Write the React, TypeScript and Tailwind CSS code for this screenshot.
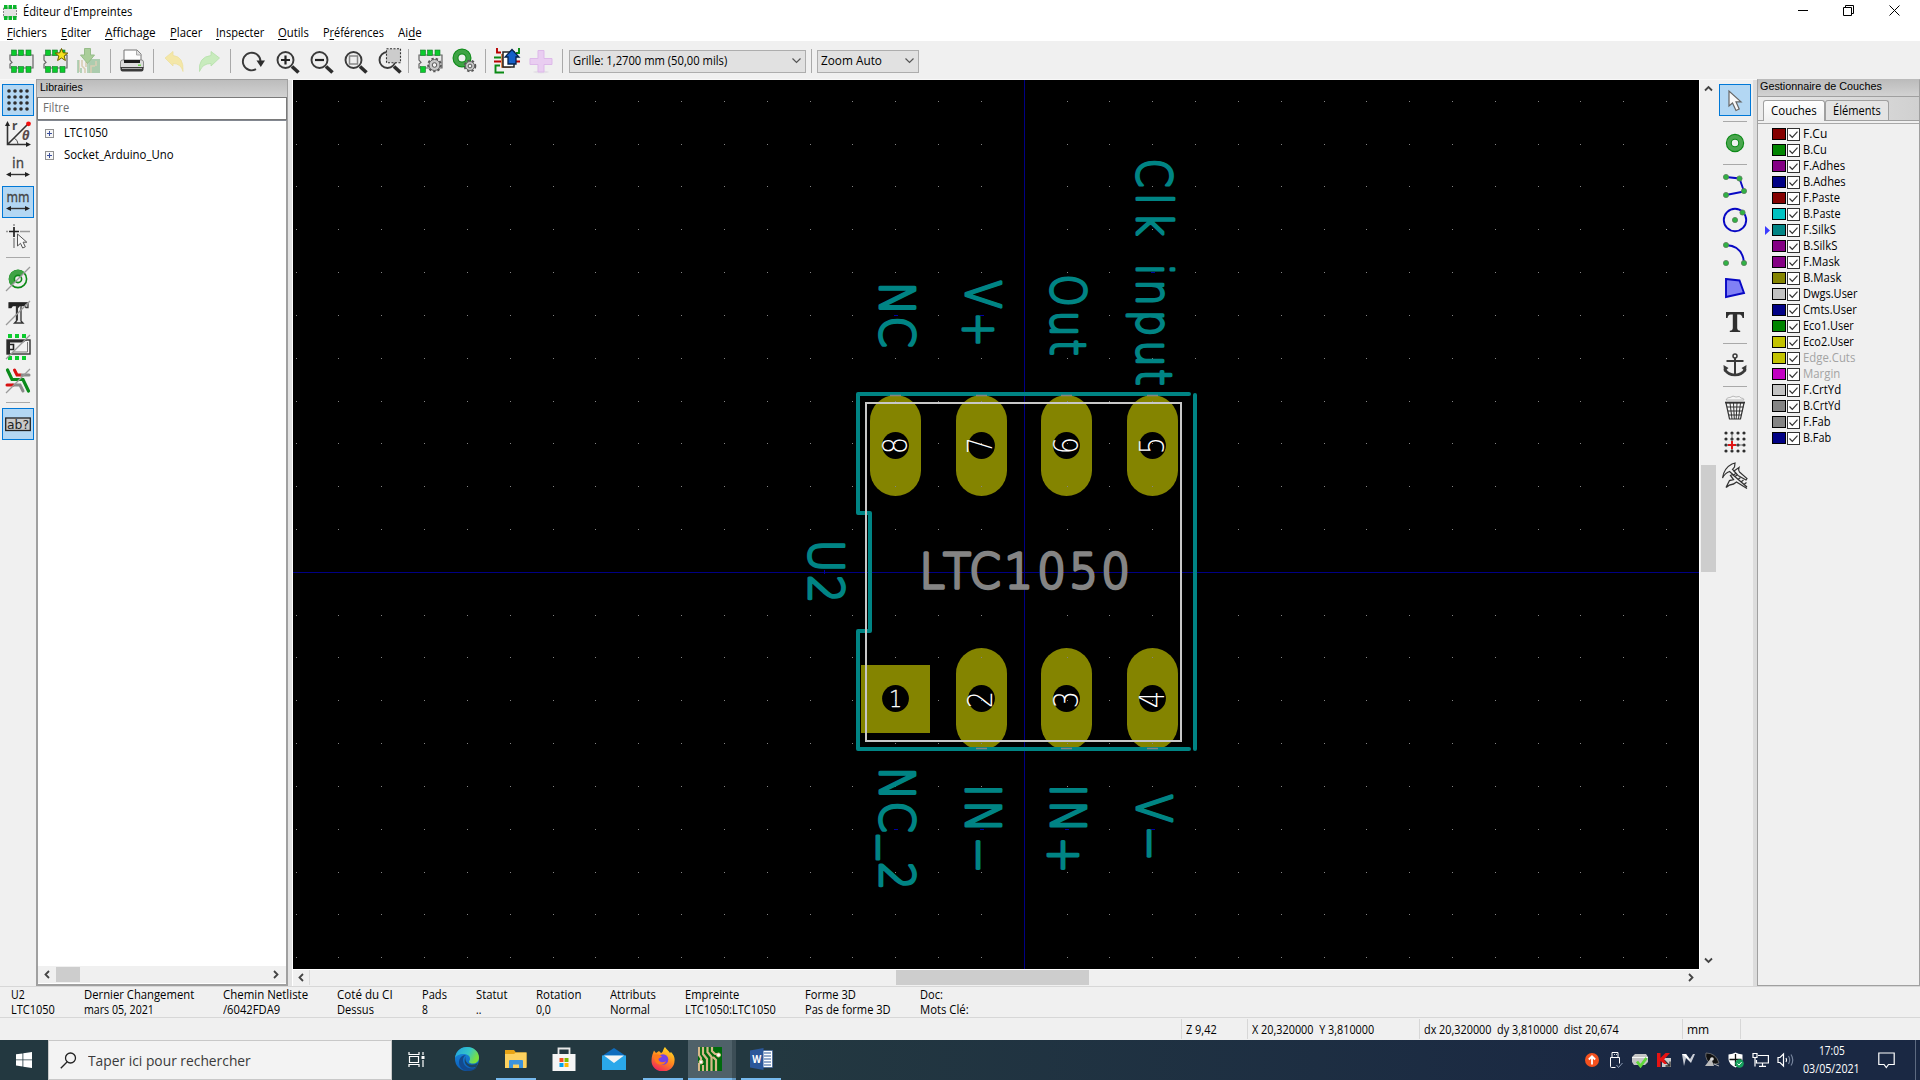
import React, { useLayoutEffect, useRef } from "react";

/* Text squeezed or stretched horizontally to a known width. */
function T({ w, children, className = "" }: { w: number; children: React.ReactNode; className?: string }) {
  const ref = useRef<HTMLSpanElement>(null);
  useLayoutEffect(() => {
    const el = ref.current;
    if (el && el.offsetWidth) el.style.transform = `scaleX(${w / el.offsetWidth})`;
  }, [w]);
  return (
    <span className={"inline-flex shrink-0 whitespace-pre " + className} style={{ width: w }}>
      <span ref={ref} className="inline-block origin-left">
        {children}
      </span>
    </span>
  );
}

function Ico({ children, s = 26 }: { children: React.ReactNode; s?: number }) {
  return (
    <svg width={s} height={s} viewBox="0 0 26 26" fill="none" className="shrink-0 overflow-visible">
      {children}
    </svg>
  );
}

const gear = (cx: number, cy: number, r: number) => (
  <g>
    <circle cx={cx} cy={cy} r={r} stroke="#555" strokeWidth="2.6" strokeDasharray="2.2 1.9" />
    <circle cx={cx} cy={cy} r={r - 0.5} fill="#c8c8c8" stroke="#666" strokeWidth="1" />
    <circle cx={cx} cy={cy} r={r * 0.38} fill="#f4f4f4" stroke="#555" strokeWidth="1" />
  </g>
);

const body = <path d="M2 7H25V20H2V16L4 14.500L2 12Z" fill="#e9e9e9" stroke="#666" strokeWidth="1.2" />;
const pads = [3.5, 10.500, 18];

const FpIcon = () => (
  <Ico>
    {body}
    {pads.map((x) => (
      <g key={x} fill="#0acb2c" stroke="#177a2a" strokeWidth=".6">
        <rect x={x} y="2" width="5" height="5.500" />
        <rect x={x} y="18.500" width="5" height="6" />
      </g>
    ))}
  </Ico>
);
const FpStarIcon = () => (
  <Ico>
    {body}
    {pads.map((x) => (
      <g key={x} fill="#0acb2c" stroke="#177a2a" strokeWidth=".6">
        <rect x={x} y="2" width="5" height="5.500" />
        <rect x={x} y="18.500" width="5" height="6" />
      </g>
    ))}
    <path d="M19.500 0.500l1.700 4.300 4.600.3-3.600 2.900 1.200 4.500-3.900-2.500-3.900 2.500 1.200-4.500-3.600-2.900 4.600-.3z" fill="#f5e21c" stroke="#6b5d00" strokeWidth="1" />
  </Ico>
);
const DownloadIcon = () => (
  <Ico>
    <g opacity=".6">
      <rect x="13" y="11" width="11" height="14" fill="#7fb583" />
      <path d="M3 12v12M6 12v6l3 3v4M10 14v5M15 25v-7h4M20 13v5" stroke="#c9b78b" strokeWidth="1.600" />
      <path d="M2 12v13M5 20v5M12 15v10" stroke="#6fae78" strokeWidth="1.500" />
      <path d="M8.500 0.500h6v6.500h4l-7 8.500L4.500 7h4z" fill="#7cb862" stroke="#5b9a45" />
    </g>
  </Ico>
);
const PrinterIcon = () => (
  <Ico>
    <path d="M5 13V2h13l4 4v7z" fill="#fdfdfd" stroke="#777" />
    <path d="M17.500 2v5h5" fill="#ddd" stroke="#999" strokeWidth=".8" />
    <path d="M1.500 14q0-2 2-2h19q2 0 2 2v6h-23z" fill="#dcdcdc" stroke="#777" strokeWidth=".8" />
    <path d="M5 12h16v3H5z" fill="#1c1c1c" />
    <path d="M1.500 19h23v2.500q0 2-2 2h-19q-2 0-2-2z" fill="#3a3a3a" />
    <path d="M3 20.500h20" stroke="#aaa" />
    <rect x="19" y="16.500" width="3" height="1.500" fill="#6fd44e" />
  </Ico>
);
const UndoIcon = () => (
  <Ico>
    <path d="M3 10L11 3.500v4q11 1 10 16-2-8-10-8V18z" fill="#f4e7a8" stroke="#ecdf9e" strokeWidth=".8" />
  </Ico>
);
const RedoIcon = () => (
  <Ico>
    <path d="M23.500 10L15 3.500v4Q2 9 3.500 23.500q3-8 11.500-8V18z" fill="#c8ebbd" stroke="#b4dfa8" strokeWidth=".8" />
  </Ico>
);
const RefreshIcon = () => (
  <Ico>
    <path d="M16 21.200A8.800 8.800 0 1 1 20.500 13.500" stroke="#3a3a3a" strokeWidth="1.900" />
    <path d="M16.500 12.500h8.500l-4.200 6.500z" fill="#2d2d2d" />
  </Ico>
);
const Mag = ({ children }: { children?: React.ReactNode }) => (
  <Ico>
    <circle cx="10.500" cy="12" r="8" stroke="#3a3a3a" strokeWidth="1.900" fill="#efefef" />
    <path d="M17 18.500l6.500 6" stroke="#2c2c2c" strokeWidth="3.600" />
    {children}
  </Ico>
);
const FpGearIcon = () => (
  <Ico>
    {body}
    {pads.map((x) => (
      <rect key={x} x={x} y="2" width="5" height="5.500" fill="#0acb2c" stroke="#177a2a" strokeWidth=".6" />
    ))}
    <rect x="3.500" y="18.500" width="5" height="6" fill="#0acb2c" stroke="#177a2a" strokeWidth=".6" />
    {gear(17.500, 17, 6)}
  </Ico>
);
const PadGearIcon = () => (
  <Ico>
    <circle cx="11" cy="10" r="6.500" stroke="#0c8a17" strokeWidth="6" />
    <circle cx="11" cy="10" r="6.500" stroke="#3fa345" strokeWidth="4" />
    {gear(19, 18, 5)}
  </Ico>
);
const ImportIcon = () => (
  <Ico>
    <path d="M3 0v4.500h4M0 13.500h7M20 13.500h6" stroke="#b80000" strokeWidth="1.900" />
    <path d="M0 9.500h7M25 0v5h-3M10 24.500H1.500v-7H6" stroke="#0a8a14" strokeWidth="1.900" />
    <path d="M8 6v13h9" stroke="#d9641a" strokeWidth="1.500" />
    <rect x="9" y="4" width="11" height="15" fill="#fff" stroke="#222" strokeWidth="1.500" />
    <path d="M18 1.500l7 7.500h-3v7h-8V9h-3z" fill="#1560c8" stroke="#06234d" strokeWidth="1.300" />
  </Ico>
);
const PlusIcon = () => (
  <Ico>
    <ellipse cx="13" cy="24" rx="8" ry="1.500" fill="#e4e1e6" />
    <path d="M10 2.500h6v8h8v6h-8v7.500h-6v-7.500H2v-6h8z" fill="#e9cdf1" stroke="#ddb9e9" />
  </Ico>
);

/* ---- vertical tool bars ---- */
const GridIcon = () => (
  <Ico>
    {[4, 10, 16, 22].map((y) => [4, 10, 16, 22].map((x) => <circle key={x + "-" + y} cx={x} cy={y} r="1.800" fill="#2e2e2e" />))}
  </Ico>
);
const PolarIcon = () => (
  <Ico>
    <path d="M2.500 3v20.500H23M2.500 23.500L23 3" stroke="#333" strokeWidth="1.600" />
    <path d="M2.500 0l2.500 5H0zM26 23.500l-5-2.500v5z" fill="#222" />
    <path d="M9 17q4 2 4 6" stroke="#555" />
    <circle cx="23.500" cy="2.800" r="2.400" fill="#f31010" />
    <text x="7" y="9" fontSize="12" fontWeight="700" fill="#4a4a4a" fontFamily="Noto Sans, sans-serif">r</text>
    <text x="17" y="18.500" fontSize="13" fontWeight="700" fontStyle="italic" fill="#5a4a4a" fontFamily="Noto Sans, sans-serif">θ</text>
  </Ico>
);
const UnitIcon = ({ t }: { t: string }) => (
  <Ico>
    <text x="13" y="12.500" fontSize="14.500" textAnchor="middle" fill="#444" stroke="#444" strokeWidth=".3" fontFamily="DejaVu Sans, sans-serif" textLength={t === "mm" ? 23 : 12} lengthAdjust="spacingAndGlyphs">{t}</text>
    <path d="M3 19.500h20" stroke="#333" strokeWidth="1.400" />
    <path d="M1 19.500l5-2.600v5.200zM25 19.500l-5-2.600v5.200z" fill="#222" />
  </Ico>
);
const CursorShapeIcon = () => (
  <Ico>
    <path d="M1 8.500h2M15 8.500h10M9 1v2M9 15v10" stroke="#999" strokeWidth="1.700" />
    <path d="M4 8.500h10M9 4v10" stroke="#222" strokeWidth="1.700" />
    <path d="M12.500 11v12l3-2.700 2.200 4.700 2.600-1.200-2.200-4.600h3.700z" fill="#f8f8f8" stroke="#555" />
  </Ico>
);
const slash = <path d="M1 25L25 1" stroke="#9a9a9a" strokeWidth="1.300" />;
const PadSketchIcon = () => (
  <Ico>
    <circle cx="13" cy="13" r="8.600" fill="#efefef" stroke="#0c8a17" strokeWidth="1.600" />
    <path d="M6.500 19.500A9 9 0 0 1 19.500 6.500z" fill="#3fa345" />
    <circle cx="13" cy="13" r="3.600" fill="#efefef" stroke="#0c8a17" strokeWidth="1.600" />
    {slash}
  </Ico>
);
const TextSketchIcon = () => (
  <Ico>
    <path d="M4 3h19v4.500h-2L19.500 5.500H16V21l2 2H9.500l2-2V5.500H7.500L6 7.500H4z" fill="#e8e8e8" stroke="#333" strokeWidth="1.300" />
    <path d="M4 2.500h18.500L19 6H15L11.500 10V6H7.500L6 8H4z" fill="#222" />
    <path d="M12.200 6v14.500" stroke="#333" strokeWidth="1.500" />
    {slash}
  </Ico>
);
const ModuleSketchIcon = () => (
  <Ico>
    {[3, 10, 17].map((x) => (
      <g key={x} fill="#0acb2c">
        <rect x={x} y="0" width="4" height="4" />
        <rect x={x} y="22" width="4" height="4" />
      </g>
    ))}
    <rect x="2" y="6" width="23" height="14" fill="#f2f2f2" stroke="#333" strokeWidth="1.400" />
    <path d="M2 6h20l-4 2.500H5V20H2z" fill="#2a2a2a" />
    <path d="M5 10.500h3.500v5H5" stroke="#222" strokeWidth="1.600" />
    <path d="M22.500 8v10H8" stroke="#777" />
    {slash}
  </Ico>
);
const TrackSketchIcon = () => (
  <Ico>
    <path d="M9.500 2l2.500 5h4" stroke="#d81010" strokeWidth="3" strokeLinecap="round" />
    <path d="M17 7h7M8 17h7l3 6" stroke="#8a8a8a" strokeWidth="3" strokeLinecap="round" />
    <path d="M2 17h6" stroke="#d81010" strokeWidth="3" strokeLinecap="round" />
    <path d="M2.500 2l4.500 9.500h11L23.500 23" stroke="#0a8a1a" strokeWidth="3.200" strokeLinecap="round" />
    {slash}
  </Ico>
);
const AbIcon = () => (
  <Ico>
    <rect x=".7" y="7" width="24.600" height="12.500" fill="#c9c9c9" stroke="#222" strokeWidth="1.300" />
    <text x="13" y="17.500" fontSize="12" textAnchor="middle" fill="#222" fontFamily="DejaVu Sans, sans-serif" textLength="22" lengthAdjust="spacingAndGlyphs">ab?</text>
  </Ico>
);
const ArrowIcon = () => (
  <Ico>
    <path d="M7 4v15l3.500-3 3.500 7.500 3.200-1.500-3.200-7.200h5z" fill="#f8f8f8" stroke="#666" strokeWidth="1.200" />
  </Ico>
);
const PadIcon = () => (
  <Ico>
    <circle cx="13" cy="13" r="6.200" stroke="#0c8a17" strokeWidth="6" />
    <circle cx="13" cy="13" r="6.200" stroke="#4aa64e" strokeWidth="3.800" />
  </Ico>
);
const Node = ({ x, y }: { x: number; y: number }) => <circle cx={x} cy={y} r="2.600" fill="#2fb344" stroke="#5b7a5b" strokeWidth=".8" />;
const PolylineIcon = () => (
  <Ico>
    <path d="M4 4l13.500 1.500L22 18.500 4 22" stroke="#0808c4" strokeWidth="1.900" />
    <Node x={4} y={4} /><Node x={17.500} y={5.500} /><Node x={22} y={18} /><Node x={4} y={22} />
  </Ico>
);
const CircleIcon = () => (
  <Ico>
    <circle cx="13" cy="13" r="11.200" stroke="#0808c4" strokeWidth="1.900" />
    <Node x={13} y={13} /><Node x={20.500} y={5.500} />
  </Ico>
);
const ArcIcon = () => (
  <Ico>
    <path d="M4 4q17 1 18 18" stroke="#0808c4" strokeWidth="1.900" />
    <Node x={4} y={4} /><Node x={4} y={22} /><Node x={22} y={22} />
  </Ico>
);
const PolyIcon = () => (
  <Ico>
    <path d="M4 4l13.500 1.500L22 18 4 22z" fill="#8080f5" stroke="#0808c4" strokeWidth="1.900" />
  </Ico>
);
const TextIcon = () => (
  <Ico>
    <path d="M4 3h18v6h-1.500q-.5-3.500-3-3.500h-2.300V19q0 2.500 3 2.700V23H7.800v-1.300q3-.2 3-2.700V5.500H8.500Q6 5.500 5.500 9H4z" fill="#2f2f2f" />
  </Ico>
);
const AnchorIcon = () => (
  <Ico>
    <circle cx="13" cy="4" r="2" stroke="#3a3a3a" strokeWidth="1.500" />
    <path d="M13 6v16M4.500 9h17" stroke="#3a3a3a" strokeWidth="2" />
    <path d="M2.500 17q3.500 6 10.500 6T23.500 17" stroke="#3a3a3a" strokeWidth="2.600" />
    <path d="M1.500 13l5 3-4.500 4zM24.500 13l-5 3 4.500 4z" fill="#3a3a3a" />
  </Ico>
);
const TrashIcon = () => (
  <Ico>
    <path d="M4 5q1-3 4-2.500 3-2.500 6-.5 4-1.500 5 1 3 0 3 2z" fill="#f5f5f5" stroke="#aaa" strokeWidth=".8" />
    <path d="M4 8h18l-3.500 16h-11z" fill="#f5f5f5" stroke="#333" strokeWidth="1.200" />
    <path d="M8 8l2 16M11.500 8l.8 16M15 8l-.8 16M18.500 8l-2 16M5 12h16.500M6 16h14.500M7 20h12.500" stroke="#333" />
    <path d="M3 7.500h20" stroke="#333" strokeWidth="1.600" />
  </Ico>
);
const GridOriginIcon = () => (
  <Ico>
    {[4, 10, 16, 22].map((y) => [4, 10, 16, 22].map((x) => <circle key={x + "-" + y} cx={x} cy={y} r="1.600" fill="#2e2e2e" />))}
    <path d="M10 4v18M4 16h18" stroke="#555" strokeWidth=".8" />
    <path d="M6 16h8M10 12v8" stroke="#e01515" strokeWidth="2" />
  </Ico>
);
const CaliperIcon = () => (
  <Ico>
    <path d="M.5 15Q2 5 10 1l3-1-.5 4-2 2.500 4 3.500-3 2-4-3.500Q3 10 .5 15z" fill="#f2f2f2" stroke="#333" strokeWidth="1.200" />
    <path d="M12 8l5-3.500q-1 3 .5 4.500l7.500 6.500-1 1.500-8-4.500z" fill="#f2f2f2" stroke="#333" strokeWidth="1.200" />
    <path d="M4 24.500l3.500-7 4-1-3-4 2-1L25 24M4 24.500q3-3 7.500-3.500l3-2 10.500 6.500" stroke="#333" strokeWidth="1.300" />
    <path d="M13 13.500l2-1.500M16 16.500l2.500-2M19 19l2.500-2M22 21.500l2.500-2" stroke="#333" strokeWidth="1.200" />
  </Ico>
);

const VBtn = ({ on, children }: { on?: boolean; children: React.ReactNode }) => (
  <div className={"mb-0.5 flex h-8 w-8 shrink-0 items-center justify-center " + (on ? "border border-[#0078d7] bg-[#b3d7f3]" : "")}>{children}</div>
);
const HSep = () => (
  <div className="flex h-[9px] w-8 shrink-0 justify-center pt-[3px]">
    <div className="h-px w-6 bg-[#a9a9a9]" />
  </div>
);
const Btn = ({ children }: { children: React.ReactNode }) => <div className="flex h-[38px] w-[34px] shrink-0 items-center justify-center">{children}</div>;
const VSep = ({ cls = "" }: { cls?: string }) => (
  <div className={"flex h-[38px] w-[9px] shrink-0 items-center justify-center " + cls}>
    <div className="h-6 w-px bg-[#a9a9a9]" />
  </div>
);
const Chevron = ({ d, c = "#444" }: { d: "u" | "d" | "l" | "r"; c?: string }) => (
  <svg width="9" height="9" viewBox="0 0 9 9" fill="none" stroke={c} strokeWidth="1.800">
    {d === "u" && <path d="M1 6.500l3.500-3.500 3.500 3.500" />}
    {d === "d" && <path d="M1 2.500l3.500 3.500 3.500-3.500" />}
    {d === "l" && <path d="M6 1L2.500 4.500 6 8" />}
    {d === "r" && <path d="M3 1l3.500 3.500L3 8" />}
  </svg>
);
const Combo = ({ text, w, cls }: { text: string; w: number; cls: string }) => (
  <div className={"flex h-[23px] shrink-0 items-center justify-between border border-[#adadad] bg-[#e1e1e1] pl-[3px] pr-1 " + cls}>
    <T w={w}>{text}</T>
    <svg width="9" height="6" viewBox="0 0 9 6" fill="none" stroke="#555" strokeWidth="1.200"><path d="M.5.500l4 4 4-4" /></svg>
  </div>
);

/* ---- board canvas ---- */
const rowsY = [101, 144, 186, 229, 272, 315, 358, 401, 443, 486, 529, 615, 657, 700, 743, 786, 829, 872, 914, 957];
let dots = "";
for (let k = -17; k <= 15; k++) {
  if (k === 0) continue;
  const x = Math.round(1023.7 + 42.83 * k);
  for (const y of rowsY) dots += `M${x} ${y}h1v1h-1z`;
}

type Glyph = [string, number, number?];
/* A label in the plotter lettering: every character is centred on its own position along the baseline. */
function Label({ glyphs, x, y, rot = 0, color, size = 48.500, sw = 2.900, squeeze = 0.93 }: { glyphs: Glyph[]; x: number; y: number; rot?: number; color: string; size?: number; sw?: number; squeeze?: number }) {
  return (
    <text
      transform={`translate(${x} ${y}) rotate(${rot}) scale(${squeeze} 1)`}
      x={glyphs.map((g) => g[1] / squeeze).join(" ")}
      y={glyphs.map((g) => g[2] || 0).join(" ")}
      textAnchor="middle"
      fontFamily="DejaVu Sans, sans-serif"
      fontWeight="200"
      fontSize={size}
      fill={color}
      stroke={color}
      strokeWidth={sw}
      strokeLinejoin="round"
      strokeLinecap="round"
    >
      {glyphs.map((g) => g[0]).join("")}
    </text>
  );
}
const TEAL = "#008484";
const padX = [895.5, 981.500, 1066.500, 1152.500];

const Board = () => (
  <svg width="1406" height="889" viewBox="293 80 1406 889" className="block shrink-0 bg-black">
    <path d="M1024.500 80V969M293 572.500H1699" stroke="#000084" strokeWidth="1" shapeRendering="crispEdges" />
    <g fill="#848400">
      {padX.map((x) => <rect key={x} x={x - 25.500} y="395" width="51" height="101" rx="25.500" />)}
      {padX.slice(1).map((x) => <rect key={x} x={x - 25.500} y="648" width="51" height="102" rx="25.500" />)}
      <rect x="861" y="665" width="69" height="68" />
    </g>
    {padX.map((x) => (
      <g key={x} fill="#000">
        <circle cx={x} cy="445.500" r="13.400" />
        <circle cx={x} cy="698.500" r="13.400" />
      </g>
    ))}
    <path d={dots} fill="#848484" shapeRendering="crispEdges" />
    <g stroke={TEAL} strokeWidth="4" strokeLinecap="round" strokeLinejoin="round">
      <path fill="none" d="M1189 394H858V513H870V631H858V749H1189M1195 395V749" />
    </g>
    <path d="M890 395.500h11M976 395.500h11M1061 395.500h11M1147 395.500h11M976 748.500h11M1061 748.500h11M1147 748.500h11" stroke="#848484" strokeWidth="1.500" />
    <rect x="866" y="403" width="315" height="338" fill="none" stroke="#c8c8c8" strokeWidth="2" />

    <Label color={TEAL} x={880} y={0} rot={90} glyphs={[["N", 298.500], ["C", 332]]} />
    <Label color={TEAL} x={966} y={0} rot={90} squeeze={0.86} glyphs={[["V", 294.500], ["+", 329.500, 2.5]]} />
    <Label color={TEAL} x={1051} y={0} rot={90} squeeze={0.85} glyphs={[["O", 290.500], ["u", 323.500], ["t", 347.500]]} />
    <Label color={TEAL} x={1137} y={0} rot={90} squeeze={0.86} glyphs={[["C", 173], ["l", 199], ["k", 224], [" ", 246], ["i", 269.500], ["n", 292.500], ["p", 323], ["u", 353.500], ["t", 377.500]]} />
    <Label color={TEAL} x={880} y={0} rot={90} glyphs={[["N", 783.500], ["C", 817], ["_", 847.500, -8], ["2", 876]]} />
    <Label color={TEAL} x={966} y={0} rot={90} squeeze={0.9} glyphs={[["I", 790.500], ["N", 816.500], ["−", 855, 2.5]]} />
    <Label color={TEAL} x={1051} y={0} rot={90} squeeze={0.9} glyphs={[["I", 790.500], ["N", 816.500], ["+", 855, 2.5]]} />
    <Label color={TEAL} x={1137} y={0} rot={90} squeeze={0.86} glyphs={[["V", 808.500], ["−", 843.500, 2.5]]} />
    <Label color={TEAL} x={809} y={0} rot={90} glyphs={[["U", 556], ["2", 589]]} />
    <Label color="#848484" x={0} y={588} sw={3.4} glyphs={[["L", 932], ["T", 957], ["C", 985], ["1", 1018.500], ["0", 1051.500], ["5", 1083.500], ["0", 1115.500]]} />

    <Label color="#fff" x={907} y={445.500} rot={-90} size={34} sw={0} squeeze={0.8} glyphs={[["8", 0]]} />
    <Label color="#fff" x={992} y={445.500} rot={-90} size={34} sw={0} squeeze={0.8} glyphs={[["7", 0]]} />
    <Label color="#fff" x={1078} y={445.500} rot={-90} size={34} sw={0} squeeze={0.8} glyphs={[["6", 0]]} />
    <Label color="#fff" x={1164} y={445.500} rot={-90} size={34} sw={0} squeeze={0.8} glyphs={[["5", 0]]} />
    <Label color="#fff" x={895.5} y={707} size={23} sw={0.3} squeeze={0.9} glyphs={[["1", 0]]} />
    <Label color="#fff" x={992} y={699.500} rot={-90} size={34} sw={0} squeeze={0.8} glyphs={[["2", 0]]} />
    <Label color="#fff" x={1078} y={699.500} rot={-90} size={34} sw={0} squeeze={0.8} glyphs={[["3", 0]]} />
    <Label color="#fff" x={1164} y={699.500} rot={-90} size={34} sw={0} squeeze={0.8} glyphs={[["4", 0]]} />
    <path d="M894 315.500h4M980 315.500h4M1151 272.500h4M894 829.500h4M980 829.500h4M1065 829.500h4M1151 829.500h4M824.500 570v4" stroke="#0000a0" />
  </svg>
);

/* ---- layers ---- */
const layers: [string, string, number, string?][] = [
  ["F.Cu", "bg-[#840000]", 24],
  ["B.Cu", "bg-[#008400]", 24],
  ["F.Adhes", "bg-[#840084]", 42],
  ["B.Adhes", "bg-[#000084]", 43],
  ["F.Paste", "bg-[#840000]", 37],
  ["B.Paste", "bg-[#00c2c2]", 38],
  ["F.SilkS", "bg-[#008484]", 33],
  ["B.SilkS", "bg-[#840084]", 34],
  ["F.Mask", "bg-[#840084]", 37],
  ["B.Mask", "bg-[#848400]", 38],
  ["Dwgs.User", "bg-[#c2c2c2]", 55],
  ["Cmts.User", "bg-[#000084]", 54],
  ["Eco1.User", "bg-[#008400]", 51],
  ["Eco2.User", "bg-[#c2c200]", 51],
  ["Edge.Cuts", "bg-[#c2c200]", 52, "text-[#a3a3a3]"],
  ["Margin", "bg-[#c200c2]", 37, "text-[#a3a3a3]"],
  ["F.CrtYd", "bg-[#c2c2c2]", 38],
  ["B.CrtYd", "bg-[#848484]", 38],
  ["F.Fab", "bg-[#848484]", 28],
  ["B.Fab", "bg-[#000084]", 28],
];

const menus: [string, string, string, number, string][] = [
  ["", "F", "ichiers", 40, "mr-[14px]"],
  ["", "E", "diter", 30, "mr-[14px]"],
  ["", "A", "ffichage", 51, "mr-[14px]"],
  ["", "P", "lacer", 32, "mr-[14px]"],
  ["", "I", "nspecter", 48, "mr-[14px]"],
  ["", "O", "utils", 31, "mr-[14px]"],
  ["P", "r", "éférences", 61, "mr-[14px]"],
  ["Ai", "d", "e", 24, ""],
];

const info: [string, number, string, number][] = [
  ["U2", 14, "LTC1050", 44],
  ["Dernier Changement", 110, "mars 05, 2021", 70],
  ["Chemin Netliste", 85, "/6042FDA9", 57],
  ["Coté du CI", 56, "Dessus", 37],
  ["Pads", 25, "8", 6],
  ["Statut", 31, "..", 5],
  ["Rotation", 45, "0,0", 15],
  ["Attributs", 46, "Normal", 40],
  ["Empreinte", 54, "LTC1050:LTC1050", 91],
  ["Forme 3D", 51, "Pas de forme 3D", 86],
  ["Doc:", 23, "Mots Clé:", 49],
];

const Task = ({ children, under, cls = "" }: { children: React.ReactNode; under?: boolean; cls?: string }) => (
  <div className={"flex h-10 shrink-0 flex-col items-center justify-between " + cls}>
    <div className="flex h-[38px] items-center">{children}</div>
    <div className={"h-0.5 w-full " + (under ? "bg-[#76b9ed]" : "")} />
  </div>
);

export default function App() {
  return (
    <div className="flex h-[1080px] w-[1920px] flex-col overflow-hidden bg-[#f0f0f0] font-['Open_Sans',_'Noto_Sans',_sans-serif] text-[12px] leading-4 text-black">
      {/* title bar */}
      <div className="flex h-6 shrink-0 items-center bg-white pl-[3px]">
        <svg width="14" height="15" viewBox="0 0 14 15" className="shrink-0">
          <rect x=".5" y="3" width="13" height="9" fill="#e3e3e3" stroke="#888" strokeDasharray="2 1" />
          {[1, 5.500, 10].map((x) => (
            <g key={x} fill="#0bb52b"><rect x={x} y="0" width="3.500" height="4" /><rect x={x} y="11" width="3.500" height="4" /></g>
          ))}
        </svg>
        <T w={109} className="ml-[6px]">Éditeur d'Empreintes</T>
        <div className="ml-auto mb-1 mr-[20px] flex items-center gap-[35px]">
          <svg width="10" height="11" viewBox="0 0 10 11" className="shrink-0"><path d="M0 5.500h10" stroke="#000" /></svg>
          <svg width="11" height="11" viewBox="0 0 11 11" fill="none" stroke="#000"><path d="M.5 2.500h8v8h-8zM2.500 2.500v-2h8v8h-2" /></svg>
          <svg width="11" height="11" viewBox="0 0 11 11" stroke="#000"><path d="M.5.500l10 10M10.500.500l-10 10" /></svg>
        </div>
      </div>
      {/* menu bar */}
      <div className="flex h-[17px] shrink-0 items-center bg-white pl-[7px]">
        {menus.map(([a, b, c, w, m]) => (
          <T key={b + c} w={w} className={m}>{a}<span className="underline underline-offset-2">{b}</span>{c}</T>
        ))}
      </div>
      {/* main tool bar */}
      <div className="flex h-[39px] shrink-0 items-center border-b border-[#f8f8f8] pl-1 pt-[2px]">
        <Btn><FpIcon /></Btn><Btn><FpStarIcon /></Btn><Btn><DownloadIcon /></Btn><VSep />
        <Btn><PrinterIcon /></Btn><VSep />
        <Btn><UndoIcon /></Btn><Btn><RedoIcon /></Btn><VSep cls="mr-px" />
        <Btn><RefreshIcon /></Btn>
        <div className="ml-px flex">
          <Btn><Mag><path d="M6 12h9M10.500 7.500v9" stroke="#222" strokeWidth="2.200" /></Mag></Btn>
          <Btn><Mag><path d="M6 12h9" stroke="#222" strokeWidth="2.200" /></Mag></Btn>
          <Btn><Mag><rect x="6.500" y="8" width="8" height="8" stroke="#888" strokeWidth="1.500" /></Mag></Btn>
          <Btn><Mag><rect x="9.500" y=".7" width="14" height="14" fill="#ccc" stroke="#333" strokeWidth="1.100" strokeDasharray="2 1.500" /></Mag></Btn>
        </div>
        <VSep cls="-ml-[3px]" />
        <Btn><FpGearIcon /></Btn><Btn><PadGearIcon /></Btn><VSep />
        <Btn><ImportIcon /></Btn><Btn><PlusIcon /></Btn><VSep />
        <Combo text="Grille: 1,2700 mm (50,00 mils)" w={154} cls="w-[237px] ml-0.5" />
        <div className="mx-[5px] h-6 w-px bg-[#a9a9a9]" />
        <Combo text="Zoom Auto" w={61} cls="w-[102px]" />
      </div>

      {/* work area */}
      <div className="flex h-[906px] shrink-0">
        {/* left tools */}
        <div className="flex w-9 shrink-0 flex-col items-center pt-1">
          <VBtn on><GridIcon /></VBtn><VBtn><PolarIcon /></VBtn><VBtn><UnitIcon t="in" /></VBtn><VBtn on><UnitIcon t="mm" /></VBtn><VBtn><CursorShapeIcon /></VBtn>
          <HSep />
          <VBtn><PadSketchIcon /></VBtn><VBtn><TextSketchIcon /></VBtn><VBtn><ModuleSketchIcon /></VBtn><VBtn><TrackSketchIcon /></VBtn>
          <HSep />
          <VBtn on><AbIcon /></VBtn>
        </div>
        {/* library tree */}
        <div className="-mt-px flex w-[252px] shrink-0 flex-col border border-[#a0a0a0]">
          <div className="flex h-[17px] shrink-0 items-start bg-linear-to-b from-[#bcbcbc] to-[#d2d2d2] pl-[3px] font-['Liberation_Sans',_sans-serif] text-[11.500px] leading-[15px]">
            <T w={43}>Librairies</T>
          </div>
          <div className="flex h-[23px] shrink-0 items-center border border-[#7a7a7a] bg-white pb-px pl-[5px] text-[#6d6d6d]"><T w={26}>Filtre</T></div>
          <div className="flex min-h-0 flex-1 flex-col border border-t-[#828790] border-[#a0a0a0] bg-white">
            <div className="flex flex-1 flex-col pt-[1px]">
              {([["LTC1050", 44], ["Socket_Arduino_Uno", 110]] as [string, number][]).map(([n, w]) => (
                <div key={n} className="flex h-[22px] items-center pl-[7px]">
                  <svg width="9" height="9" viewBox="0 0 9 9" className="mr-[10px]" fill="none"><rect x=".5" y=".5" width="8" height="8" fill="#f6f6f6" stroke="#919191" /><path d="M2 4.500h5M4.500 2v5" stroke="#3b4f9c" /></svg>
                  <T w={w}>{n}</T>
                </div>
              ))}
            </div>
            <div className="mb-px flex h-[17px] shrink-0 items-center bg-[#f0f0f0] pl-[5px] pr-[6px]">
              <Chevron d="l" />
              <div className="ml-1 h-[15px] w-6 bg-[#cdcdcd]" />
              <div className="ml-auto"><Chevron d="r" /></div>
            </div>
          </div>
        </div>
        <div className="w-1 shrink-0 bg-[#e3e3e3]" />
        <div className="w-px shrink-0 bg-white" />
        {/* canvas and its scroll bars */}
        <div className="flex w-[1406px] shrink-0 flex-col">
          <Board />
          <div className="flex h-[17px] items-start border-t border-white pl-1 pr-1">
            <div className="flex h-[15px] items-center"><Chevron d="l" /></div>
            <div className="ml-[3px] h-[15px] w-px bg-[#dadada]" />
            <div className="ml-[586px] h-[15px] w-[193px] bg-[#cdcdcd]" />
            <div className="ml-auto flex h-[15px] items-center"><Chevron d="r" /></div>
          </div>
        </div>
        <div className="flex h-[889px] w-[17px] shrink-0 flex-col items-center border-l border-white pt-1 pb-1">
          <Chevron d="u" />
          <div className="mt-[372px] h-[107px] w-[15px] bg-[#cdcdcd]" />
          <div className="mt-auto"><Chevron d="d" /></div>
        </div>
        {/* right tools */}
        <div className="flex w-[37px] shrink-0 flex-col pl-[3px] pt-1">
          <VBtn on><ArrowIcon /></VBtn><HSep /><VBtn><PadIcon /></VBtn><HSep />
          <VBtn><PolylineIcon /></VBtn><VBtn><CircleIcon /></VBtn><VBtn><ArcIcon /></VBtn><VBtn><PolyIcon /></VBtn><VBtn><TextIcon /></VBtn>
          <HSep /><VBtn><AnchorIcon /></VBtn><HSep />
          <VBtn><TrashIcon /></VBtn><VBtn><GridOriginIcon /></VBtn><VBtn><CaliperIcon /></VBtn>
        </div>
        <div className="w-1 shrink-0 bg-[#dcdcdc]" />
        {/* layer manager */}
        <div className="-mt-px flex min-w-0 flex-1 flex-col border border-[#a0a0a0] border-t-[#bbb]">
          <div className="flex h-4 shrink-0 items-start bg-linear-to-b from-[#bcbcbc] to-[#d2d2d2] pl-[2px] font-['Liberation_Sans',_sans-serif] text-[11.500px] leading-[13px]">
            <T w={122}>Gestionnaire de Couches</T>
          </div>
          <div className="flex h-[25px] shrink-0 items-end border-b border-t border-[#a0a0a0] bg-linear-to-r from-[#ececec] to-[#d0d0d0] pl-[5px]">
            <div className="-mb-px flex h-[21px] w-[62px] justify-center rounded-t-[3px] border border-b-0 border-[#a0a0a0] bg-linear-to-b from-white to-[#f0f0f0] pt-[2px]"><T w={46}>Couches</T></div>
            <div className="flex h-5 w-[64px] justify-center rounded-t-[3px] border border-b-0 border-[#a0a0a0] bg-[#e4e4e4] pt-[2px]"><T w={48}>Éléments</T></div>
          </div>
          <div className="mt-[2px] flex flex-1 flex-col border-t border-[#a8a8a8] pt-[2px]">
            {layers.map(([n, bg, w, c]) => (
              <div key={n} className="flex h-4 shrink-0 items-center pl-[7px]">
                <svg width="5" height="9" viewBox="0 0 5 9" className="mr-[2px]">{n === "F.SilkS" && <path d="M0 0L5 4.500 0 9z" fill="#3c3cff" />}</svg>
                <div className={"h-3 w-[14px] border border-black " + bg} />
                <svg width="13" height="13" viewBox="0 0 13 13" className="ml-px mr-[3px]" fill="none"><rect x=".5" y=".5" width="12" height="12" fill="#fff" stroke="#333" /><path d="M2.500 6.500l2.800 2.800 5.200-5.600" stroke="#333" strokeWidth="1.200" /></svg>
                <T w={w} className={c}>{n}</T>
              </div>
            ))}
          </div>
        </div>
      </div>

      {/* item information */}
      <div className="grid h-8 shrink-0 grid-cols-[73px_139px_114px_85px_54px_60px_74px_75px_120px_115px_1fr] border-b border-t border-[#d7d7d7] pl-[11px] leading-[15px]">
        {info.map(([a, aw, b, bw]) => (
          <div key={a} className="flex flex-col"><T w={aw}>{a}</T><T w={bw}>{b}</T></div>
        ))}
      </div>
      {/* status bar */}
      <div className="flex h-[22px] shrink-0 items-center pl-[1181px]">
        <div className="flex h-5 w-[66px] items-center border-l border-[#d7d7d7] pl-1 pt-[2px]"><T w={31}>Z 9,42</T></div>
        <div className="flex h-5 w-[172px] items-center border-l border-[#d7d7d7] pl-1 pt-[2px]"><T w={122}>{"X 20,320000  Y 3,810000"}</T></div>
        <div className="flex h-5 w-[263px] items-center border-l border-[#d7d7d7] pl-1 pt-[2px]"><T w={195}>{"dx 20,320000  dy 3,810000  dist 20,674"}</T></div>
        <div className="flex h-5 w-[58px] items-center border-l border-[#d7d7d7] pl-1 pt-[2px]"><T w={22}>mm</T></div>
        <div className="h-5 border-l border-[#d7d7d7]" />
      </div>

      {/* task bar */}
      <div className="flex h-10 shrink-0 bg-linear-to-r from-[#233840] from-40% to-[#1a2843] to-85%">
        <div className="flex w-12 shrink-0 items-center justify-center">
          <svg width="16" height="16" viewBox="0 0 16 16" fill="#fff"><path d="M0 2.300L6.500 1.400V7.500H0zM7.300 1.300L16 0v7.500H7.300zM0 8.300h6.500v6.200L0 13.600zM7.300 8.300H16V16l-8.700-1.300z" /></svg>
        </div>
        <div className="flex w-[344px] shrink-0 items-center border border-[#c8c8c8] bg-[#f3f3f3] pl-[11px] text-[15px] text-[#3a3a3a]">
          <svg width="17" height="17" viewBox="0 0 17 17" fill="none" stroke="#222" strokeWidth="1.300" className="mr-[11px]"><circle cx="10.500" cy="6" r="5" /><path d="M7 10L.8 16.200" /></svg>
          <T w={163}>Taper ici pour rechercher</T>
        </div>
        <Task cls="w-[48px] mr-px"><svg width="17" height="17" viewBox="0 0 17 17" fill="none" stroke="#fff" strokeWidth="1.200"><path d="M1 1v2.500h10V1M1 16v-2.500h10V16M1.500 5.500h9v6h-9zM15 1v3M15 9v7" /><path d="M13.500 5h3v3h-3z" fill="#fff" stroke="none" /></svg></Task>
        <Task cls="w-[51px]">
          <svg width="24" height="24" viewBox="0 0 24 24">
            <defs>
              <linearGradient id="eg" x1="0" y1="0" x2="1" y2=".4"><stop offset="0" stopColor="#1f9fe0" /><stop offset=".6" stopColor="#35c6c8" /><stop offset="1" stopColor="#7ae03e" /></linearGradient>
              <linearGradient id="eb" x1="0" y1="0" x2="0" y2="1"><stop offset="0" stopColor="#1b8fe0" /><stop offset="1" stopColor="#0b5cb8" /></linearGradient>
            </defs>
            <circle cx="12" cy="12" r="12" fill="url(#eb)" />
            <path d="M0 11C1 3 7 0 12 0c7 0 12 5 12 10.500 0 4-3 6-6 6-2.500 0-4-.8-4-1.800 0-.8 1-1.200 1-3C15 8.500 12 7 8.500 7 4 7 1 9 0 11z" fill="url(#eg)" />
            <path d="M8 13c0 5 4 8.500 9 8.500 2 0 3.500-.5 5-1.500-2 3-6 4-9 4-5 0-9-4-9-8.500C4 11 7 8 11 8c-2 1-3 3-3 5z" fill="#134a8e" />
            <path d="M11 9c-1.500 2.500-.5 8.500 6 8.800 2.500 0 4.500-.8 5.800-2-.5 2-1 3-2 4.200-4 1.500-10-.5-11-5-.4-2 0-4.500 1.200-6z" fill="#233840" opacity=".75" />
          </svg>
        </Task>
        <Task cls="mx-1 w-10" under>
          <svg width="22" height="18" viewBox="0 0 22 18"><path d="M0 0h9l2 2.500h10.500V17H0z" fill="#e8a415" /><path d="M0 4h9l2-1.500h10.500V18H0z" fill="#fdd15f" /><path d="M4 18v-7q0-1 1-1h12q1 0 1 1v7h-4v-3.500H8V18z" fill="#3c93dd" /></svg>
        </Task>
        <Task cls="w-[48px]">
          <svg width="24" height="25" viewBox="0 0 24 25"><path d="M6.500 8V1.500h11V8" fill="none" stroke="#e8e8e8" strokeWidth="1.800" /><path d="M.5 7h23v17h-23z" fill="#f5f5f5" /><path d="M7.500 11h4v4h-4z" fill="#f25022" /><path d="M12.500 11h4v4h-4z" fill="#7fba00" /><path d="M7.500 16h4v4h-4z" fill="#00a4ef" /><path d="M12.500 16h4v4h-4z" fill="#ffb900" /></svg>
        </Task>
        <Task cls="w-[52px]">
          <svg width="24" height="22" viewBox="0 0 24 22"><path d="M0 8L12 0l12 8v2H0z" fill="#0f6cbd" /><path d="M0 7.500h24V22H0z" fill="#2aa8ea" /><path d="M2 7.500h20l-10 7.500z" fill="#f4f4f4" /></svg>
        </Task>
        <Task cls="ml-[3px] w-10" under>
          <svg width="24" height="24" viewBox="0 0 24 24">
            <defs><linearGradient id="ff" x1=".8" y1="0" x2=".3" y2="1"><stop offset="0" stopColor="#ffe226" /><stop offset=".5" stopColor="#ff8a1e" /><stop offset="1" stopColor="#f0245c" /></linearGradient></defs>
            <path d="M14 0c1 2 4 4 5 6l1-1c3 3 4 6 3.500 9A11.500 10.500 0 0 1 .5 14C.5 9 2 6 3 3.500l2 2.500 3-2 2 2c2 0 2-4 4-6z" fill="url(#ff)" />
            <circle cx="12" cy="12.500" r="5.300" fill="#7542e5" /><path d="M3 8c3-2 6 0 8 1.500-1 1.500-3 1-3.500 2.500 0 3 4 4.500 7.500 2-1 4-7 5-10 1.500C3 13 2.500 10 3 8z" fill="#ff7a1c" />
          </svg>
        </Task>
        <Task cls="ml-[5px] w-[44px] bg-[#4f6169]" under>
          <svg width="24" height="24" viewBox="0 0 24 24" fill="none"><path d="M0 0h24v24H0z" fill="#006a0c" /><path d="M1 0v8l2 3v3M5 0v7l4 5v12M9.500 0v5l4 5v14M14 0v4l3 3h3M18 24V13l-3-3M5 24v-6M1 24v-8" stroke="#d7b98a" strokeWidth="2.200" /><circle cx="20.500" cy="8" r="2" fill="#fff" stroke="#d7b98a" /><circle cx="3" cy="15" r="2" fill="#fff" stroke="#d7b98a" /></svg>
        </Task>
        <div className="flex h-10 w-1 shrink-0 flex-col justify-end bg-[#3c4e56]"><div className="h-0.5 bg-[#5f94bd]" /></div>
        <Task cls="ml-[5px] w-10" under>
          <svg width="23" height="22" viewBox="0 0 23 22"><path d="M12 2.500h10.500v17H12z" fill="#fff" stroke="#2b579a" strokeWidth=".6" /><path d="M14 5h7M14 8h7M14 11h7M14 14h7M14 17h7" stroke="#2b579a" strokeWidth="1.200" /><path d="M0 2.500L13.500 0v22L0 19.500z" fill="#2b579a" /><text x="6.700" y="15" fontSize="11" fontWeight="700" fill="#fff" textAnchor="middle" fontFamily="Open Sans, sans-serif" textLength="9" lengthAdjust="spacingAndGlyphs">W</text></svg>
        </Task>
        {/* notification area */}
        <div className="ml-auto flex items-center text-white">
          <div className="flex items-center gap-2">
            <svg width="16" height="16" viewBox="0 0 16 16"><circle cx="8" cy="8" r="7" fill="#f4511e" /><path d="M8 12.500V4.500M4.800 7.500L8 4.300l3.200 3.200" stroke="#fff" strokeWidth="1.800" fill="none" /></svg>
            <svg width="16" height="18" viewBox="0 0 16 18" fill="none" stroke="#fff"><path d="M4 6V1.500h6V6M2.500 6.500h9v6M2.500 6.500v9q0 1 1 1h4" /><path d="M6 3.500h.8M8 3.500h.8" strokeWidth="1.200" /><path d="M8.500 14l2 2.500 4-4.500" stroke="#8d9cb4" /></svg>
            <svg width="16" height="16" viewBox="0 0 16 16"><path d="M0 5l3-3h11l2 3v5l-3 3H2l-2-3z" fill="#c4c4c4" /><path d="M0 5.500h16" stroke="#f3f3f3" /><path d="M5 9.500l3.500 4.500 6-8" stroke="#5fd83a" strokeWidth="2.800" fill="none" /></svg>
            <svg width="16" height="16" viewBox="0 0 16 16"><path d="M6 6h9v9H6z" fill="#ccc" /><path d="M8 8l6 6m-4.500 0H14V9.500" stroke="#333" strokeWidth="1.300" fill="none" /><path d="M1 1h3.500v5l5-5H14L8 7.500l3 4.500H8.500L4.500 9v6H1z" fill="#e81313" /></svg>
            <svg width="16" height="16" viewBox="0 0 16 16"><path d="M2 2h4l4 5 3-5h2l-4 9-1-1-4-4-2 8z" fill="#c9cdd6" /><path d="M2 2h4l5 8z" fill="#fff" /></svg>
            <svg width="16" height="16" viewBox="0 0 16 16"><path d="M2 1q10 0 13 10-8 3-12-3Q1 4 2 1z" fill="#111" stroke="#777" strokeWidth=".8" /><path d="M7 6L1 14h9z" fill="#bbb" /><circle cx="8" cy="7" r="1.800" fill="#ddd" /><path d="M10 12l5 2" stroke="#bbb" /></svg>
            <svg width="16" height="16" viewBox="0 0 16 16"><path d="M7.500.500Q10 2 14.500 2.500V7q0 5-7 8.500-7-3.500-7-8.500V2.500Q5 2 7.500.500z" fill="#fff" /><path d="M7.500 2v12M1.500 7.500h12" stroke="#111" strokeWidth="1.300" /><circle cx="11.500" cy="11.500" r="4.300" fill="#17a05d" /><path d="M9.500 11.500l1.500 1.600 2.600-3" stroke="#fff" fill="none" /></svg>
            <svg width="17" height="16" viewBox="0 0 17 16" fill="none" stroke="#fff" strokeWidth="1.200"><path d="M6 3.500h10.400v7.500H4.500V8M10.500 11v3M7 14.400h7M1 1.500h4v4H1zM3 5.500v9" /></svg>
            <svg width="17" height="16" viewBox="0 0 17 16" fill="none" stroke="#fff" strokeWidth="1.200"><path d="M1 5.500h2L6.500 2v12L3 10.500H1z" /><path d="M9 6q1.200 2 0 4" /><path d="M11.500 4q2.400 4 0 8M14 2.500q3.500 5.500 0 11" stroke="#76849c" /></svg>
          </div>
          <div className="ml-[9px] flex flex-col items-center gap-[2px]">
            <T w={26}>17:05</T>
            <T w={57}>03/05/2021</T>
          </div>
          <svg width="17" height="17" viewBox="0 0 17 17" fill="none" stroke="#fff" strokeWidth="1.200" className="ml-[18px]"><path d="M.8 1h15.400v11.500H10.500L8.300 15.500 6 12.500H.8z" /></svg>
          <div className="ml-5 mr-1 h-10 w-px bg-[#5d6a80]" />
        </div>
      </div>
    </div>
  );
}
